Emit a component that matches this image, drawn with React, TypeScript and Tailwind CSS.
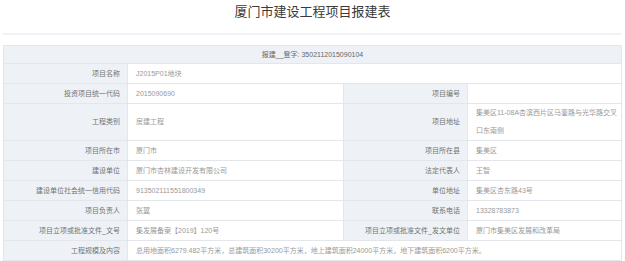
import React from 'react';

type Row =
  | { kind: 'wide'; label: string; value: string }
  | { kind: 'pair'; l1: string; v1: string; l2: string; v2: React.ReactNode; tall?: boolean };

const ROWS: Row[] = [
  { kind: 'wide', label: '项目名称', value: 'J2015P01地块' },
  { kind: 'pair', l1: '投资项目统一代码', v1: '2015090690', l2: '项目编号', v2: '' },
  {
    kind: 'pair',
    l1: '工程类别',
    v1: '房建工程',
    l2: '项目地址',
    v2: (
      <>
        集美区11-08A杏滨西片区马銮路与光华路交叉
        <br />
        口东南侧
      </>
    ),
    tall: true,
  },
  { kind: 'pair', l1: '项目所在市', v1: '厦门市', l2: '项目所在县', v2: '集美区' },
  { kind: 'pair', l1: '建设单位', v1: '厦门市杏林建设开发有限公司', l2: '法定代表人', v2: '王智' },
  { kind: 'pair', l1: '建设单位社会统一信用代码', v1: '913502111551800349', l2: '单位地址', v2: '集美区杏东路43号' },
  { kind: 'pair', l1: '项目负责人', v1: '张翼', l2: '联系电话', v2: '13328783873' },
  {
    kind: 'pair',
    l1: '项目立项或批准文件_文号',
    v1: '集发展备案【2019】120号',
    l2: '项目立项或批准文件_发文单位',
    v2: '厦门市集美区发展和改革局',
  },
  {
    kind: 'wide',
    label: '工程规模及内容',
    value: '总用地面积6279.482平方米，总建筑面积30200平方米，地上建筑面积24000平方米，地下建筑面积6200平方米。',
  },
  { kind: 'pair', l1: '', v1: '', l2: '', v2: '' },
];

const labelCls = 'border border-[#e3e7ec] bg-[#eef2f7] text-right pr-[7px] text-[#727272] whitespace-nowrap';
const valueCls = 'border border-[#e3e7ec] bg-white text-left pl-[8px] pr-[2px] text-[#999] whitespace-nowrap';

export default function App() {
  return (
    <div className="w-[625px] h-[261px] overflow-hidden bg-white px-[3px] font-['Liberation_Sans','Noto_Sans_CJK_SC',sans-serif]">
      <h1 className="pt-[1px] text-center text-[13px] leading-[22px] text-[#3a3a3a]">厦门市建设工程项目报建表</h1>
      <div className="mt-[10px] h-[2px] w-[618px] bg-[#f1f2f4]" />

      <table className="mt-[10px] w-[618px] table-fixed border-collapse text-[7px]">
        <colgroup>
          <col className="w-[124px]" />
          <col className="w-[216px]" />
          <col className="w-[124px]" />
          <col className="w-[154px]" />
        </colgroup>
        <tbody>
          <tr>
            <td colSpan={4} className="border border-[#e3e7ec] bg-[#eef2f7] text-center leading-[17px] text-[#666]">
              报建__登字: 3502112015090104
            </td>
          </tr>
          {ROWS.map((r, i) =>
            r.kind === 'wide' ? (
              <tr key={i} className="leading-[19px]">
                <td className={labelCls}>{r.label}</td>
                <td colSpan={3} className={valueCls}>{r.value}</td>
              </tr>
            ) : (
              <tr key={i} className={r.tall ? 'leading-[18px]' : 'leading-[19px]'}>
                <td className={labelCls}>{r.l1}</td>
                <td className={valueCls}>{r.v1}</td>
                <td className={labelCls}>{r.l2}</td>
                <td className={valueCls}>{r.v2}</td>
              </tr>
            )
          )}
        </tbody>
      </table>
    </div>
  );
}
